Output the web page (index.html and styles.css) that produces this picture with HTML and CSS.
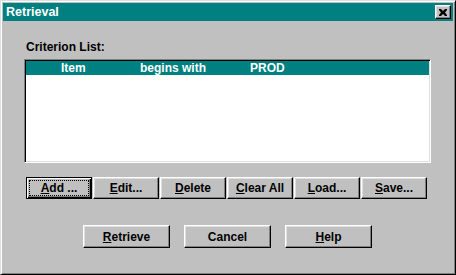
FILE: index.html
```html
<!DOCTYPE html>
<html lang="en">
<head>
    <meta charset="UTF-8">
    <title>Retrieval</title>
    <link rel="stylesheet" href="styles.css">
</head>
<body>
    <div class="dialog">
        <div class="titlebar">
            <span class="title">Retrieval</span>
            <button class="close-btn" aria-label="Close">
                <svg width="8" height="7" viewBox="0 0 8 7">
                    <path d="M0 0h2l2 2 2-2h2v1L6 3.5 8 6v1H6L4 5 2 7H0V6l2-2.5L0 1z" fill="#000"/>
                </svg>
            </button>
        </div>

        <div class="content">
            <div class="label">Criterion List:</div>

            <div class="listbox">
                <div class="row selected">
                    <span class="col-field">Item</span>
                    <span class="col-op">begins with</span>
                    <span class="col-value">PROD</span>
                </div>
            </div>

            <div class="btn-row">
                <button class="btn default"><span class="focus"><u>A</u>dd ...</span></button>
                <button class="btn"><u>E</u>dit...</button>
                <button class="btn"><u>D</u>elete</button>
                <button class="btn"><u>C</u>lear All</button>
                <button class="btn"><u>L</u>oad...</button>
                <button class="btn"><u>S</u>ave...</button>
            </div>

            <div class="action-row">
                <button class="btn big"><u>R</u>etrieve</button>
                <button class="btn big">Cancel</button>
                <button class="btn big"><u>H</u>elp</button>
            </div>
        </div>
    </div>
</body>
</html>
```

FILE: styles.css
```css
:root
{
    --face: #c0c0c0;
    --light: #dfdfdf;
    --shadow: #808080;
    --teal: #008080;
}

*
{
    margin: 0;
    padding: 0;
    box-sizing: border-box;
}

body
{
    width: 456px;
    height: 275px;
    background-color: var(--face);
    font-family: "Liberation Sans", Arial, sans-serif;
    font-size: 12px;
    font-weight: bold;
    color: #000;
}

.dialog
{
    width: 456px;
    height: 275px;
    padding: 2px;
    background-color: var(--face);
    border: 1px solid;
    border-color: var(--light) #000 #000 var(--light);
    box-shadow: inset 1px 1px #fff, inset -1px -1px var(--shadow);
}

.titlebar
{
    display: flex;
    align-items: center;
    justify-content: space-between;
    height: 18px;
    background-color: var(--teal);
}

.title
{
    padding-left: 3px;
    color: #fff;
    font-size: 12.5px;
    line-height: 18px;
}

.close-btn
{
    display: flex;
    align-items: center;
    justify-content: center;
    width: 16px;
    height: 14px;
    margin-right: 2px;
    background-color: var(--face);
    border: 1px solid;
    border-color: #fff #000 #000 #fff;
    box-shadow: inset -1px -1px var(--shadow), inset 1px 1px var(--light);
}

.content
{
    padding: 19px 0 0 21px;
}

.label
{
    margin-left: 2px;
    line-height: 14px;
}

.listbox
{
    width: 407px;
    height: 104px;
    margin-top: 5px;
    padding: 1px;
    background-color: #fff;
    border: 1px solid;
    border-color: var(--shadow) #fff #fff var(--shadow);
    box-shadow: inset 1px 1px #000, inset -1px -1px var(--light);
}

.row
{
    display: flex;
    height: 14px;
    line-height: 14px;
    padding-left: 35px;
}

.row.selected
{
    background-color: var(--teal);
    color: #fff;
}

.col-field
{
    width: 79px;
}

.col-op
{
    width: 110px;
}

.btn
{
    display: flex;
    align-items: center;
    justify-content: center;
    height: 22px;
    width: 66px;
    background-color: var(--face);
    font-family: inherit;
    font-size: 12px;
    font-weight: bold;
    color: #000;
    border: 1px solid;
    border-color: #fff #000 #000 #fff;
    box-shadow: inset -1px -1px var(--shadow), inset 1px 1px var(--light);
}

.btn u
{
    text-decoration-thickness: 1px;
    text-underline-offset: 1px;
}

.btn.default
{
    border-color: #000;
    box-shadow: inset 1px 1px #fff, inset -1px -1px #000, inset -2px -2px var(--shadow);
}

.btn .focus
{
    display: flex;
    align-items: center;
    justify-content: center;
    width: 58px;
    height: 14px;
    outline: 1px dotted #000;
}

.btn-row
{
    display: flex;
    gap: 1px;
    margin: 14px 0 0 2px;
}

.action-row
{
    display: flex;
    gap: 14px;
    margin: 26px 0 0 59px;
}

.btn.big
{
    width: 87px;
    height: 23px;
}
```
